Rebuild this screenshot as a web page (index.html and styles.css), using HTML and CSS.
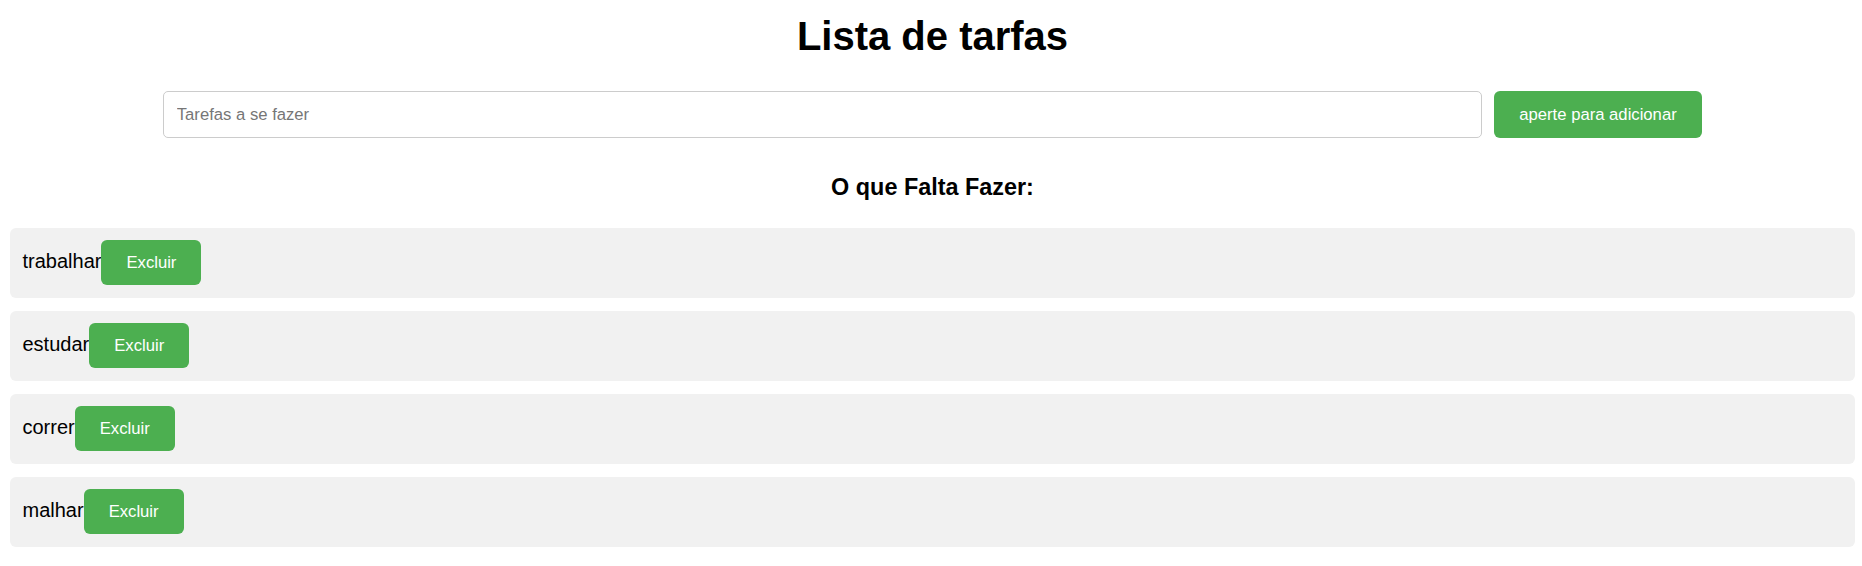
FILE: index.html
```html
<!DOCTYPE html>
<html lang="pt-BR">
<head>
<meta charset="utf-8">
<title>Lista de tarfas</title>
<link rel="stylesheet" href="styles.css">
</head>
<body>
<h1 class="title">Lista de tarfas</h1>
<div class="add-row">
  <input class="task-input" type="text" placeholder="Tarefas a se fazer">
  <button class="btn btn-add">aperte para adicionar</button>
</div>
<h3 class="subtitle">O que Falta Fazer:</h3>
<ul class="task-list">
  <li class="task">trabalhar<button class="btn">Excluir</button></li>
  <li class="task">estudar<button class="btn">Excluir</button></li>
  <li class="task">correr<button class="btn">Excluir</button></li>
  <li class="task">malhar<button class="btn">Excluir</button></li>
</ul>
</body>
</html>
```
FILE: styles.css
```css
html, body {
  background: #ffffff;
}

body {
  margin: 10px 7px 10px 10px;
  font-family: "Liberation Sans", Arial, sans-serif;
  color: #000000;
}

.title {
  font-size: 40px;
  font-weight: bold;
  text-align: center;
  margin: 4.4px 0 31.9px;
}

.add-row {
  display: flex;
  justify-content: center;
  gap: 12.5px;
}

.task-input {
  width: 70%;
  padding: 12.5px;
  border: 1px solid #cccccc;
  border-radius: 5px;
  font-family: "Liberation Sans", Arial, sans-serif;
  font-size: 16.67px;
  color: #000000;
  outline: none;
  margin: 0;
}

.task-input::placeholder {
  color: #767676;
}

.btn {
  background: #4caf50;
  color: #ffffff;
  border: none;
  border-radius: 6px;
  padding: 12.5px 25px;
  font-family: "Liberation Sans", Arial, sans-serif;
  font-size: 16.67px;
  cursor: pointer;
  margin: 0;
}

.subtitle {
  font-size: 23.4px;
  font-weight: bold;
  text-align: center;
  margin: 35.3px 0 27.3px;
}

.task-list {
  list-style: none;
  margin: 0;
  padding: 0;
}

.task {
  background: #f1f1f1;
  border-radius: 6px;
  padding: 12.5px;
  margin-bottom: 12.9px;
  font-size: 20px;
}
```
